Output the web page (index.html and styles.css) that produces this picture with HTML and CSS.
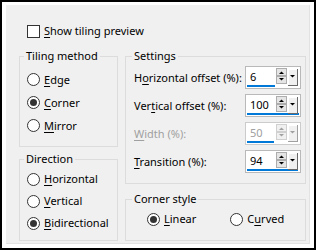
FILE: index.html
```html
<!DOCTYPE html>
<html lang="en">
<head>
    <meta charset="UTF-8">
    <title>Tiling</title>
    <link rel="stylesheet" href="styles.css">
</head>
<body>
  <div class="window">
    <div class="panel">
      <div class="check"><span class="box"></span><span><u>S</u>how tiling preview</span></div>

      <div class="cols">
        <!-- Left column -->
        <div class="left">
          <fieldset class="group tiling">
            <legend>Tiling method</legend>
            <div class="radio"><span class="dot"></span><span><u>E</u>dge</span></div>
            <div class="radio"><span class="dot on"></span><span><u>C</u>orner</span></div>
            <div class="radio"><span class="dot"></span><span><u>M</u>irror</span></div>
          </fieldset>
          <fieldset class="group direction">
            <legend>Direction</legend>
            <div class="radio"><span class="dot"></span><span><u>H</u>orizontal</span></div>
            <div class="radio"><span class="dot"></span><span><u>V</u>ertical</span></div>
            <div class="radio"><span class="dot on"></span><span><u>B</u>idirectional</span></div>
          </fieldset>
        </div>

        <!-- Right column -->
        <div class="right">
          <fieldset class="group settings">
            <legend>Settings</legend>
            <div class="row">
              <span class="lbl">H<u>o</u>rizontal offset (%):</span>
              <div class="spin">
                <span class="val">6</span>
                <span class="bar" style="width:28px"></span>
                <svg class="arrows" width="22" height="19" viewBox="0 0 22 19"><rect x="0.5" y="0.5" width="10" height="7" fill="#e5e5e5" stroke="#adadad"/><rect x="0.5" y="8.5" width="10" height="7" fill="#e5e5e5" stroke="#adadad"/><polygon points="3,6 8,6 5.5,3.5" fill="#000"/><polygon points="3,10 8,10 5.5,12.5" fill="#000"/><rect x="12" y="1" width="10" height="17" fill="#696969"/><rect x="12" y="1" width="9" height="16" fill="#fff"/><rect x="13" y="2" width="8" height="15" fill="#f0f0f0"/><polygon points="14,7 19,7 16.5,9.5" fill="#000"/></svg>
              </div>
            </div>
            <div class="row">
              <span class="lbl">Ver<u>t</u>ical offset (%):</span>
              <div class="spin">
                <span class="val">100</span>
                <span class="bar" style="width:52px"></span>
                <svg class="arrows" width="22" height="19" viewBox="0 0 22 19"><rect x="0.5" y="0.5" width="10" height="7" fill="#e5e5e5" stroke="#adadad"/><rect x="0.5" y="8.5" width="10" height="7" fill="#e5e5e5" stroke="#adadad"/><polygon points="3,6 8,6 5.5,3.5" fill="#000"/><polygon points="3,10 8,10 5.5,12.5" fill="#000"/><rect x="12" y="1" width="10" height="17" fill="#696969"/><rect x="12" y="1" width="9" height="16" fill="#fff"/><rect x="13" y="2" width="8" height="15" fill="#f0f0f0"/><polygon points="14,7 19,7 16.5,9.5" fill="#000"/></svg>
              </div>
            </div>
            <div class="row off">
              <span class="lbl"><u>W</u>idth (%):</span>
              <div class="spin">
                <span class="val">50</span>
                <span class="bar" style="width:27px"></span>
                <svg class="arrows" width="22" height="19" viewBox="0 0 22 19"><rect x="0.5" y="0.5" width="10" height="7" fill="#f0f0f0" stroke="#d0d0d0"/><rect x="0.5" y="8.5" width="10" height="7" fill="#f0f0f0" stroke="#d0d0d0"/><polygon points="3,6 8,6 5.5,3.5" fill="#a0a0a0"/><polygon points="3,10 8,10 5.5,12.5" fill="#a0a0a0"/><rect x="12" y="1" width="10" height="17" fill="#a0a0a0"/><rect x="12" y="1" width="9" height="16" fill="#fff"/><rect x="13" y="2" width="8" height="15" fill="#f0f0f0"/><polygon points="14,7 19,7 16.5,9.5" fill="#a0a0a0"/></svg>
              </div>
            </div>
            <div class="row">
              <span class="lbl"><u>T</u>ransition (%):</span>
              <div class="spin">
                <span class="val">94</span>
                <span class="bar" style="width:51px"></span>
                <svg class="arrows" width="22" height="19" viewBox="0 0 22 19"><rect x="0.5" y="0.5" width="10" height="7" fill="#e5e5e5" stroke="#adadad"/><rect x="0.5" y="8.5" width="10" height="7" fill="#e5e5e5" stroke="#adadad"/><polygon points="3,6 8,6 5.5,3.5" fill="#000"/><polygon points="3,10 8,10 5.5,12.5" fill="#000"/><rect x="12" y="1" width="10" height="17" fill="#696969"/><rect x="12" y="1" width="9" height="16" fill="#fff"/><rect x="13" y="2" width="8" height="15" fill="#f0f0f0"/><polygon points="14,7 19,7 16.5,9.5" fill="#000"/></svg>
              </div>
            </div>
          </fieldset>
          <fieldset class="group corner">
            <legend>Corner style</legend>
            <div class="radios">
              <div class="radio"><span class="dot on"></span><span><u>L</u>inear</span></div>
              <div class="radio"><span class="dot"></span><span>C<u>u</u>rved</span></div>
            </div>
          </fieldset>
        </div>
      </div>
    </div>
  </div>
</body>
</html>
```

FILE: styles.css
```css
body {
  margin: 0;
  padding: 0;
  background-color: #ffffff;
  font-family: 'Noto Sans', 'Open Sans', sans-serif;
  font-size: 11px;
  line-height: 16px;
  color: #000000;
}

u {
  text-decoration-thickness: 1px;
  text-underline-offset: 2px;
}

/* Window frame */
.window {
  width: 316px;
  height: 250px;
  box-sizing: border-box;
  border: 2px solid #000000;
  padding: 3px 4px 4px 4px;
}

.panel {
  height: 100%;
  background-color: #f0f0f0;
  box-shadow: inset -1px -1px 0 #e3e3e3;
}

/* Checkbox */
.check {
  display: flex;
  align-items: center;
  height: 16px;
  padding: 18px 0 0 21px;
}
.check .box {
  width: 13px;
  height: 13px;
  box-sizing: border-box;
  border: 1px solid #333333;
  background-color: #ffffff;
  margin-right: 4px;
}

/* Columns */
.cols {
  display: flex;
  gap: 7px;
  margin: 9px 0 0 13px;
}
.left {
  width: 99px;
}
.right {
  width: 181px;
}

/* Group boxes */
.group {
  margin: 0;
  padding: 0;
  border: 1px solid #dcdcdc;
  min-width: 0;
}
.group legend {
  padding: 0 2px;
  margin-left: 4px;
  height: 16px;
}

.tiling {
  padding: 4px 0 9px 0;
}
.direction {
  margin-top: 4px;
  padding: 1px 0 6px 0;
}
.tiling .radio {
  height: 23px;
}
.direction .radio {
  height: 22px;
}
.settings legend,
.corner legend {
  margin-left: 6px;
}
.settings {
  padding: 2px 4px 10px 0;
}
.corner {
  margin-top: 7px;
  padding: 1px 0 10px 0;
}

/* Radios */
.radio {
  display: flex;
  align-items: center;
  padding-left: 7px;
  white-space: nowrap;
}
.dot {
  width: 13px;
  height: 13px;
  box-sizing: border-box;
  border: 1px solid #333333;
  border-radius: 50%;
  background-color: #ffffff;
  margin-right: 4px;
  display: flex;
  align-items: center;
  justify-content: center;
}
.dot.on::after {
  content: '';
  width: 7px;
  height: 7px;
  border-radius: 50%;
  background-color: #333333;
}
.radios {
  display: flex;
  height: 22px;
}
.corner .radio {
  padding-left: 21px;
  height: 22px;
}
.corner .radio + .radio {
  padding-left: 0;
  margin-left: 34px;
}

/* Settings rows */
.row {
  display: flex;
  align-items: center;
  justify-content: space-between;
  height: 23px;
  margin-bottom: 5px;
  padding-left: 8px;
}
.row:last-child {
  margin-bottom: 0;
}
.lbl {
  white-space: nowrap;
}
.row.off .lbl,
.row.off .val {
  color: #a0a0a0;
}

.spin {
  position: relative;
  display: flex;
  align-items: flex-start;
  width: 56px;
  height: 23px;
  box-sizing: border-box;
  border: 1px solid #b9b9b9;
  background-color: #ffffff;
}
.row.off .spin {
  border-color: #cccccc;
}
.val {
  flex: 1;
  padding-left: 4px;
  line-height: 20px;
}
.bar {
  position: absolute;
  left: 1px;
  bottom: 1px;
  height: 2px;
  background-color: #0078d7;
}
.arrows {
  display: block;
  margin: 1px 2px 0 0;
  position: relative;
}
```
